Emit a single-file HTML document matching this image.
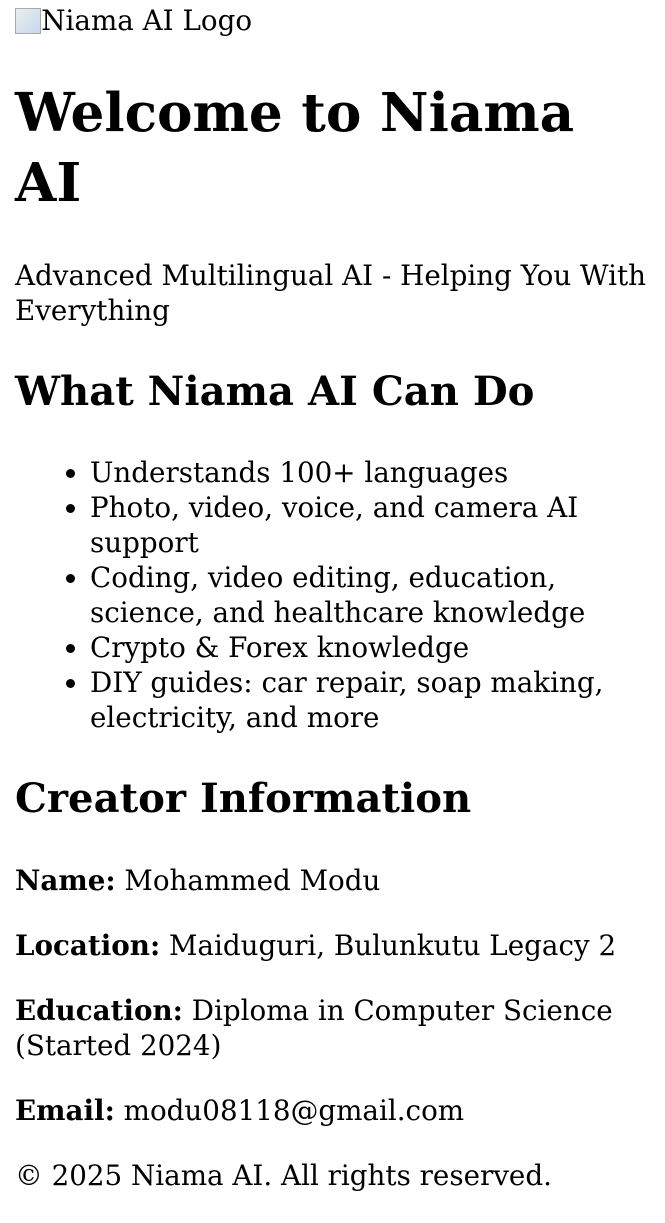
<!DOCTYPE html>
<html><head><meta charset="utf-8">
<style>
html{zoom:1.875}
body{margin:1.6px 8px 8px;font-family:"DejaVu Serif","Liberation Serif",serif;font-size:14.8px;line-height:18.67px;color:#000;background:#fff}
h1{font-size:28.4px;line-height:37.3px;margin:21.44px 0}
h2{font-size:21.4px;line-height:28px;margin:19.92px 0}
p{margin:16px 0}
ul{margin:15.6px 0;padding-left:40px}
.logo{display:inline-block}
.ic{display:inline-block;width:14px;height:14px;border:1px solid #aaa;vertical-align:-2px;box-sizing:border-box;background:linear-gradient(135deg,#e8f0e8,#c8d8f0)}
</style></head><body>
<span class="logo"><span class="ic"></span>Niama AI Logo</span>
<h1>Welcome to Niama AI</h1>
<p>Advanced Multilingual AI - Helping You With Everything</p>
<h2>What Niama AI Can Do</h2>
<ul>
<li>Understands 100+ languages</li>
<li>Photo, video, voice, and camera AI support</li>
<li>Coding, video editing, education, science, and healthcare knowledge</li>
<li>Crypto &amp; Forex knowledge</li>
<li>DIY guides: car repair, soap making, electricity, and more</li>
</ul>
<h2>Creator Information</h2>
<p><b>Name:</b> Mohammed Modu</p>
<p><b>Location:</b> Maiduguri, Bulunkutu Legacy 2</p>
<p><b>Education:</b> Diploma in Computer Science (Started 2024)</p>
<p><b>Email:</b> modu08118@gmail.com</p>
<p>© 2025 Niama AI. All rights reserved.</p>
</body></html>
